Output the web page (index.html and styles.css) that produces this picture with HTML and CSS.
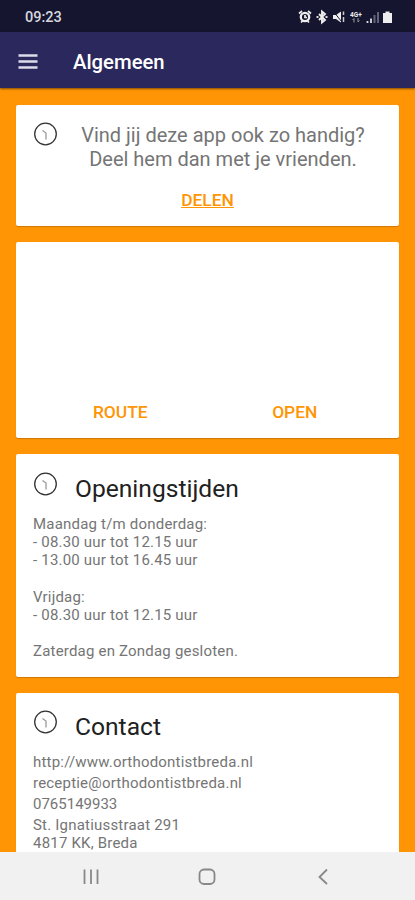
FILE: index.html
```html
<!DOCTYPE html>
<html lang="nl">
<head>
  <meta charset="UTF-8" />
  <meta name="viewport" content="width=device-width, initial-scale=1.0"/>
  <title>Algemeen</title>
  <link rel="stylesheet" href="styles.css">
</head>
<body>
  <!-- Status bar -->
  <div class="status-bar">
    <span class="time">09:23</span>
    <svg class="status-icons" width="98" height="16" viewBox="0 0 98 16">
      <!-- Alarm -->
      <circle cx="7" cy="8" r="4.200" fill="none" stroke="#eee" stroke-width="2.300"/>
      <path d="M1 4.500L4 2M13 4.500L10 2M3 13.500L4.500 12M11 13.500L9.500 12M7 6V8.500H9" fill="none" stroke="#eee" stroke-width="1.700"/>
      <!-- Bluetooth -->
      <path d="M21 5L27 11L24 13.500V2.500L27 5L21 11" fill="none" stroke="#eee" stroke-width="1.900"/>
      <path d="M18.500 8H20.500M27.500 8H29.500" stroke="#ddd" stroke-width="2.200"/>
      <!-- Muted -->
      <path d="M35 6H38L43 2.500V13.500L38 10H35Z" fill="#eee"/>
      <path d="M35.500 2.500L43.500 12.500" stroke="#15152f" stroke-width="1"/>
      <path d="M45.500 2.500V6M45.500 8V13" stroke="#ccc" stroke-width="1.500"/>
      <!-- Data -->
      <text class="network" x="52" y="8">4G+</text>
      <path d="M56 9.500V13.500M54.500 11L56 9.500M60 9V13M60 13L61.500 11.500" fill="none" stroke="#999" stroke-width="1"/>
      <!-- Signal -->
      <path d="M69.500 12V14M73 9.500V14" stroke="#ddd" stroke-width="1.800"/>
      <path d="M76.500 6V14M80 3V14" stroke="#62627a" stroke-width="2"/>
      <!-- Battery -->
      <path d="M85 4H87.500V2.500H91.500V4H94V14H85Z" fill="#eee"/>
    </svg>
  </div>

  <!-- App bar -->
  <header class="app-bar">
    <svg class="menu-icon" width="20" height="16" viewBox="0 0 20 16">
      <path d="M0.500 1.500H19.500M0.500 7.500H19.500M0.500 13.500H19.500" stroke="#dcdcea" stroke-width="2.300"/>
    </svg>
    <h1>Algemeen</h1>
  </header>

  <main class="content">
    <!-- Share -->
    <section class="card share">
      <div class="share-row">
        <svg class="clock" width="24" height="24" viewBox="0 0 24 24">
          <circle cx="12.500" cy="12" r="10.800"/>
          <path d="M9.500 8.500L13 11V17.500"/>
        </svg>
        <p>Vind jij deze app ook zo handig?<br>Deel hem dan met je vrienden.</p>
      </div>
      <a class="action underline">DELEN</a>
    </section>

    <!-- Map -->
    <section class="card map">
      <a class="action">ROUTE</a>
      <a class="action">OPEN</a>
    </section>

    <!-- Opening hours -->
    <section class="card hours">
      <div class="card-title">
        <svg class="clock" width="24" height="24" viewBox="0 0 24 24">
          <circle cx="12.500" cy="12" r="10.800"/>
          <path d="M9.500 8.500L13 11V17.500"/>
        </svg>
        <h2>Openingstijden</h2>
      </div>
      <p>Maandag t/m donderdag:<br>- 08.30 uur tot 12.15 uur<br>- 13.00 uur tot 16.45 uur<br><br>Vrijdag:<br>- 08.30 uur tot 12.15 uur<br><br>Zaterdag en Zondag gesloten.</p>
    </section>

    <!-- Contact -->
    <section class="card contact">
      <div class="card-title">
        <svg class="clock" width="24" height="24" viewBox="0 0 24 24">
          <circle cx="12.500" cy="12" r="10.800"/>
          <path d="M9.500 8.500L13 11V17.500"/>
        </svg>
        <h2>Contact</h2>
      </div>
      <p>http://www.orthodontistbreda.nl</p>
      <p>receptie@orthodontistbreda.nl</p>
      <p class="phone">0765149933</p>
      <p>St. Ignatiusstraat 291<br>4817 KK, Breda</p>
    </section>
  </main>

  <!-- System navigation -->
  <nav class="nav-bar">
    <svg width="18" height="18" viewBox="0 0 18 18">
      <path d="M2.500 1.500V16M9 1.500V16M15.500 1.500V16"/>
    </svg>
    <svg width="18" height="18" viewBox="0 0 18 18">
      <rect x="1.500" y="1.500" width="15" height="14.500" rx="4.500"/>
    </svg>
    <svg width="18" height="18" viewBox="0 0 18 18">
      <path d="M13 1.500L5.500 9L13 16"/>
    </svg>
  </nav>
</body>
</html>
```

FILE: styles.css
```css
* {
  margin: 0;
  padding: 0;
  box-sizing: border-box;
}
body {
  display: flex;
  flex-direction: column;
  height: 900px;
  overflow: hidden;
  background-color: #ff9505;
  font-family: Roboto, sans-serif;
  color: #757575;
}
/* Status bar */
.status-bar {
  display: flex;
  flex-shrink: 0;
  justify-content: space-between;
  align-items: center;
  height: 32px;
  padding: 2px 19px 0 25px;
  background-color: #15152f;
}
.time {
  font-size: 14.5px;
  font-weight: 500;
  color: #d8d8de;
}
.network {
  font-size: 6.5px;
  font-weight: bold;
  fill: #eee;
}
/* App bar */
.app-bar {
  display: flex;
  flex-shrink: 0;
  align-items: center;
  gap: 35px;
  height: 56px;
  padding: 3px 18px 0;
  background-color: #2a285d;
  box-shadow: 0 1px 2px rgba(0, 0, 0, 0.5);
}
h1 {
  font-size: 20.3px;
  font-weight: 500;
  color: #fff;
}
/* Cards */
.content {
  display: flex;
  flex: 1;
  flex-direction: column;
  gap: 16px;
  min-height: 0;
  padding: 17px 16px 0;
  overflow: hidden;
}
.card {
  flex-shrink: 0;
  padding: 16px 17px;
  background-color: #fff;
  border-radius: 2px;
  box-shadow: 0 1px 1px rgba(0, 0, 0, 0.2);
}
.clock {
  flex-shrink: 0;
  fill: none;
  stroke: #333;
  stroke-width: 1.3;
}
.clock path {
  stroke: #999;
}
.action {
  font-size: 17.4px;
  font-weight: 500;
  line-height: 20px;
  color: #ff9505;
}
.underline {
  text-decoration: underline;
}
.share {
  display: flex;
  flex-direction: column;
  align-items: center;
  height: 121px;
}
.share-row {
  display: flex;
  width: 100%;
  padding-top: 1px;
}
.share-row p {
  flex: 1;
  padding: 1px 0 0 7px;
  font-size: 20px;
  line-height: 24px;
  text-align: center;
}
.share .action {
  margin-top: 19px;
}
.map {
  display: flex;
  align-items: flex-end;
  height: 196px;
}
.map .action {
  flex: 1;
  text-align: center;
}
.hours {
  height: 223px;
  padding-top: 17px;
}
.card-title {
  display: flex;
  align-items: flex-start;
  gap: 18px;
  height: 44px;
}
.card-title .clock {
  margin-top: 1px;
}
h2 {
  padding-top: 2px;
  font-size: 24.6px;
  font-weight: 400;
  line-height: 32px;
  color: #212121;
}
.hours p,
.contact p {
  font-size: 15px;
  line-height: 18px;
  letter-spacing: 0.2px;
}
.hours p {
  line-height: 18.15px;
}
.contact p {
  margin-bottom: 3px;
}
.contact .phone {
  letter-spacing: 0;
}
/* System navigation */
.nav-bar {
  display: flex;
  flex-shrink: 0;
  justify-content: space-between;
  align-items: center;
  height: 48px;
  padding: 2px 83px 0 82px;
  background-color: #f1f1f1;
}
.nav-bar svg {
  fill: none;
  stroke: #888;
  stroke-width: 1.8;
}
```
